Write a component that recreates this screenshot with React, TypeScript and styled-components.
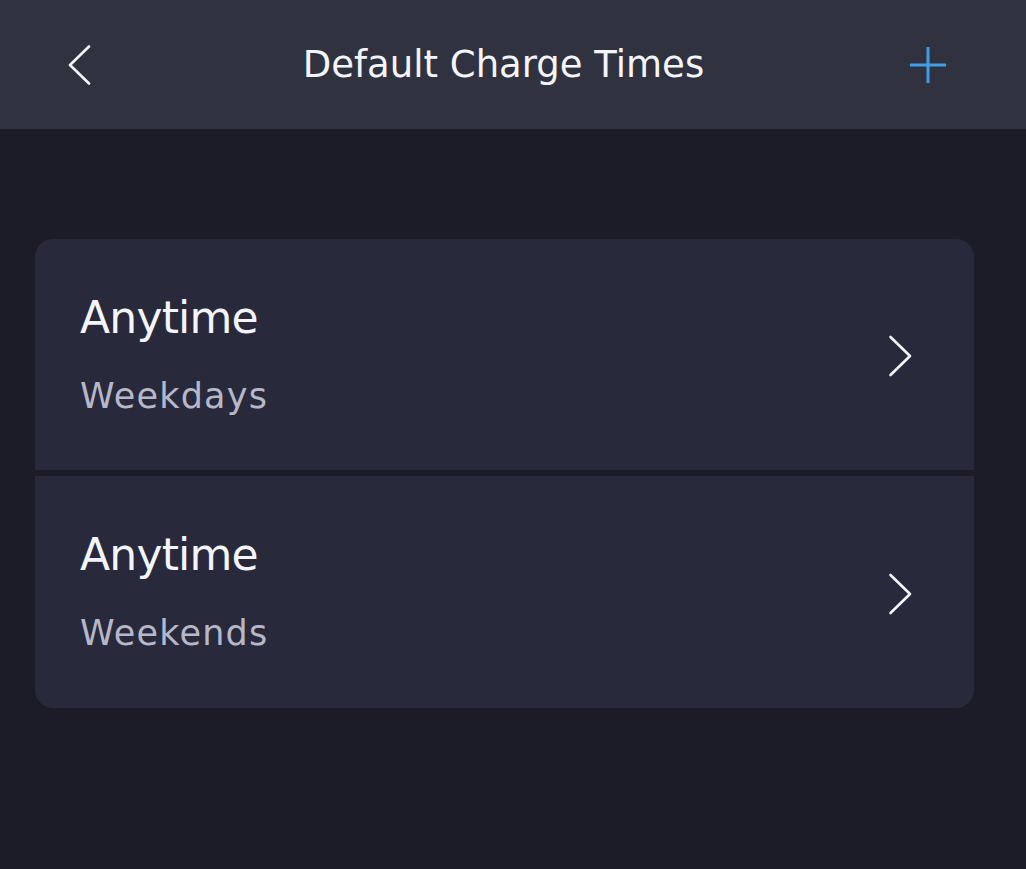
import React from "react";
import styled, { createGlobalStyle } from "styled-components";

const Global = createGlobalStyle`
  html, body {
    margin: 0;
    padding: 0;
    background: #1b1c27;
  }
  body {
    font-family: "DejaVu Sans", "Noto Sans", sans-serif;
    font-variant-ligatures: none;
    -webkit-font-smoothing: antialiased;
  }
`;

const Page = styled.div`
  min-height: 869px;
  background: #1b1c27;
  display: flex;
  flex-direction: column;
`;

const Header = styled.header`
  height: 129px;
  background: #30323f;
  display: flex;
  align-items: center;
  padding: 0 79px 0 68px;
  box-sizing: border-box;
`;

const IconButton = styled.button<{ $w: number }>`
  width: ${(p) => p.$w}px;
  height: 40px;
  padding: 0;
  border: 0;
  background: transparent;
  display: flex;
  align-items: center;
  justify-content: center;
  cursor: pointer;
  margin-top: 1px;
`;

const Title = styled.h1`
  flex: 1;
  margin: 1px 0 0;
  padding-left: 6px;
  text-align: center;
  color: #f4f5fa;
  font-family: "DejaVu Sans", "Noto Sans", sans-serif;
  font-weight: 400;
  font-size: 37px;
  line-height: 44px;
`;

const Content = styled.main`
  padding: 110px 52px 0 35px;
`;

const Card = styled.section`
  border-radius: 18px;
  overflow: hidden;
  display: flex;
  flex-direction: column;
  gap: 6px;
  background: #1b1c27;
`;

const Row = styled.div<{ $first?: boolean }>`
  height: ${(p) => (p.$first ? 231 : 232)}px;
  background: #282a3b;
  display: flex;
  align-items: center;
  padding: 0 62px 0 45px;
  box-sizing: border-box;
  cursor: pointer;
`;

const Texts = styled.div`
  flex: 1;
  display: flex;
  flex-direction: column;
  gap: 32px;
  margin-bottom: 2px;
`;

const RowTitle = styled.div`
  color: #f4f5fa;
  font-size: 44px;
  line-height: 52px;
  font-weight: 400;
  letter-spacing: -0.8px;
`;

const RowSub = styled.div`
  color: #b6b8c9;
  font-size: 35px;
  line-height: 40px;
  font-weight: 400;
  letter-spacing: 1.2px;
`;

const ChevronWrap = styled.span`
  display: flex;
  margin-top: 3px;
`;

const BackIcon = () => (
  <svg width="24" height="40" viewBox="0 0 24 40" fill="none">
    <path d="M21 1.5 L2 20 L21 38.5" stroke="#f4f5fa" strokeWidth="2.6" strokeLinecap="round" strokeLinejoin="round" />
  </svg>
);

const PlusIcon = () => (
  <svg width="38" height="38" viewBox="0 0 38 38" fill="none">
    <path d="M19 1 V37 M1 19 H37" stroke="#3f9ee9" strokeWidth="3" strokeLinecap="butt" />
  </svg>
);

const ChevronIcon = () => (
  <svg width="24" height="42" viewBox="0 0 24 42" fill="none">
    <path d="M2.5 2 L22 21 L2.5 40" stroke="#f4f5fa" strokeWidth="2.6" strokeLinecap="round" strokeLinejoin="round" />
  </svg>
);

const items = [
  { title: "Anytime", sub: "Weekdays" },
  { title: "Anytime", sub: "Weekends" },
];

export default function App() {
  return (
    <>
      <Global />
      <Page>
        <Header>
          <IconButton $w={24} aria-label="Back">
            <BackIcon />
          </IconButton>
          <Title>Default Charge Times</Title>
          <IconButton $w={38} aria-label="Add">
            <PlusIcon />
          </IconButton>
        </Header>
        <Content>
          <Card>
            {items.map((it, i) => (
              <Row key={i} $first={i === 0}>
                <Texts>
                  <RowTitle>{it.title}</RowTitle>
                  <RowSub>{it.sub}</RowSub>
                </Texts>
                <ChevronWrap>
                  <ChevronIcon />
                </ChevronWrap>
              </Row>
            ))}
          </Card>
        </Content>
      </Page>
    </>
  );
}
